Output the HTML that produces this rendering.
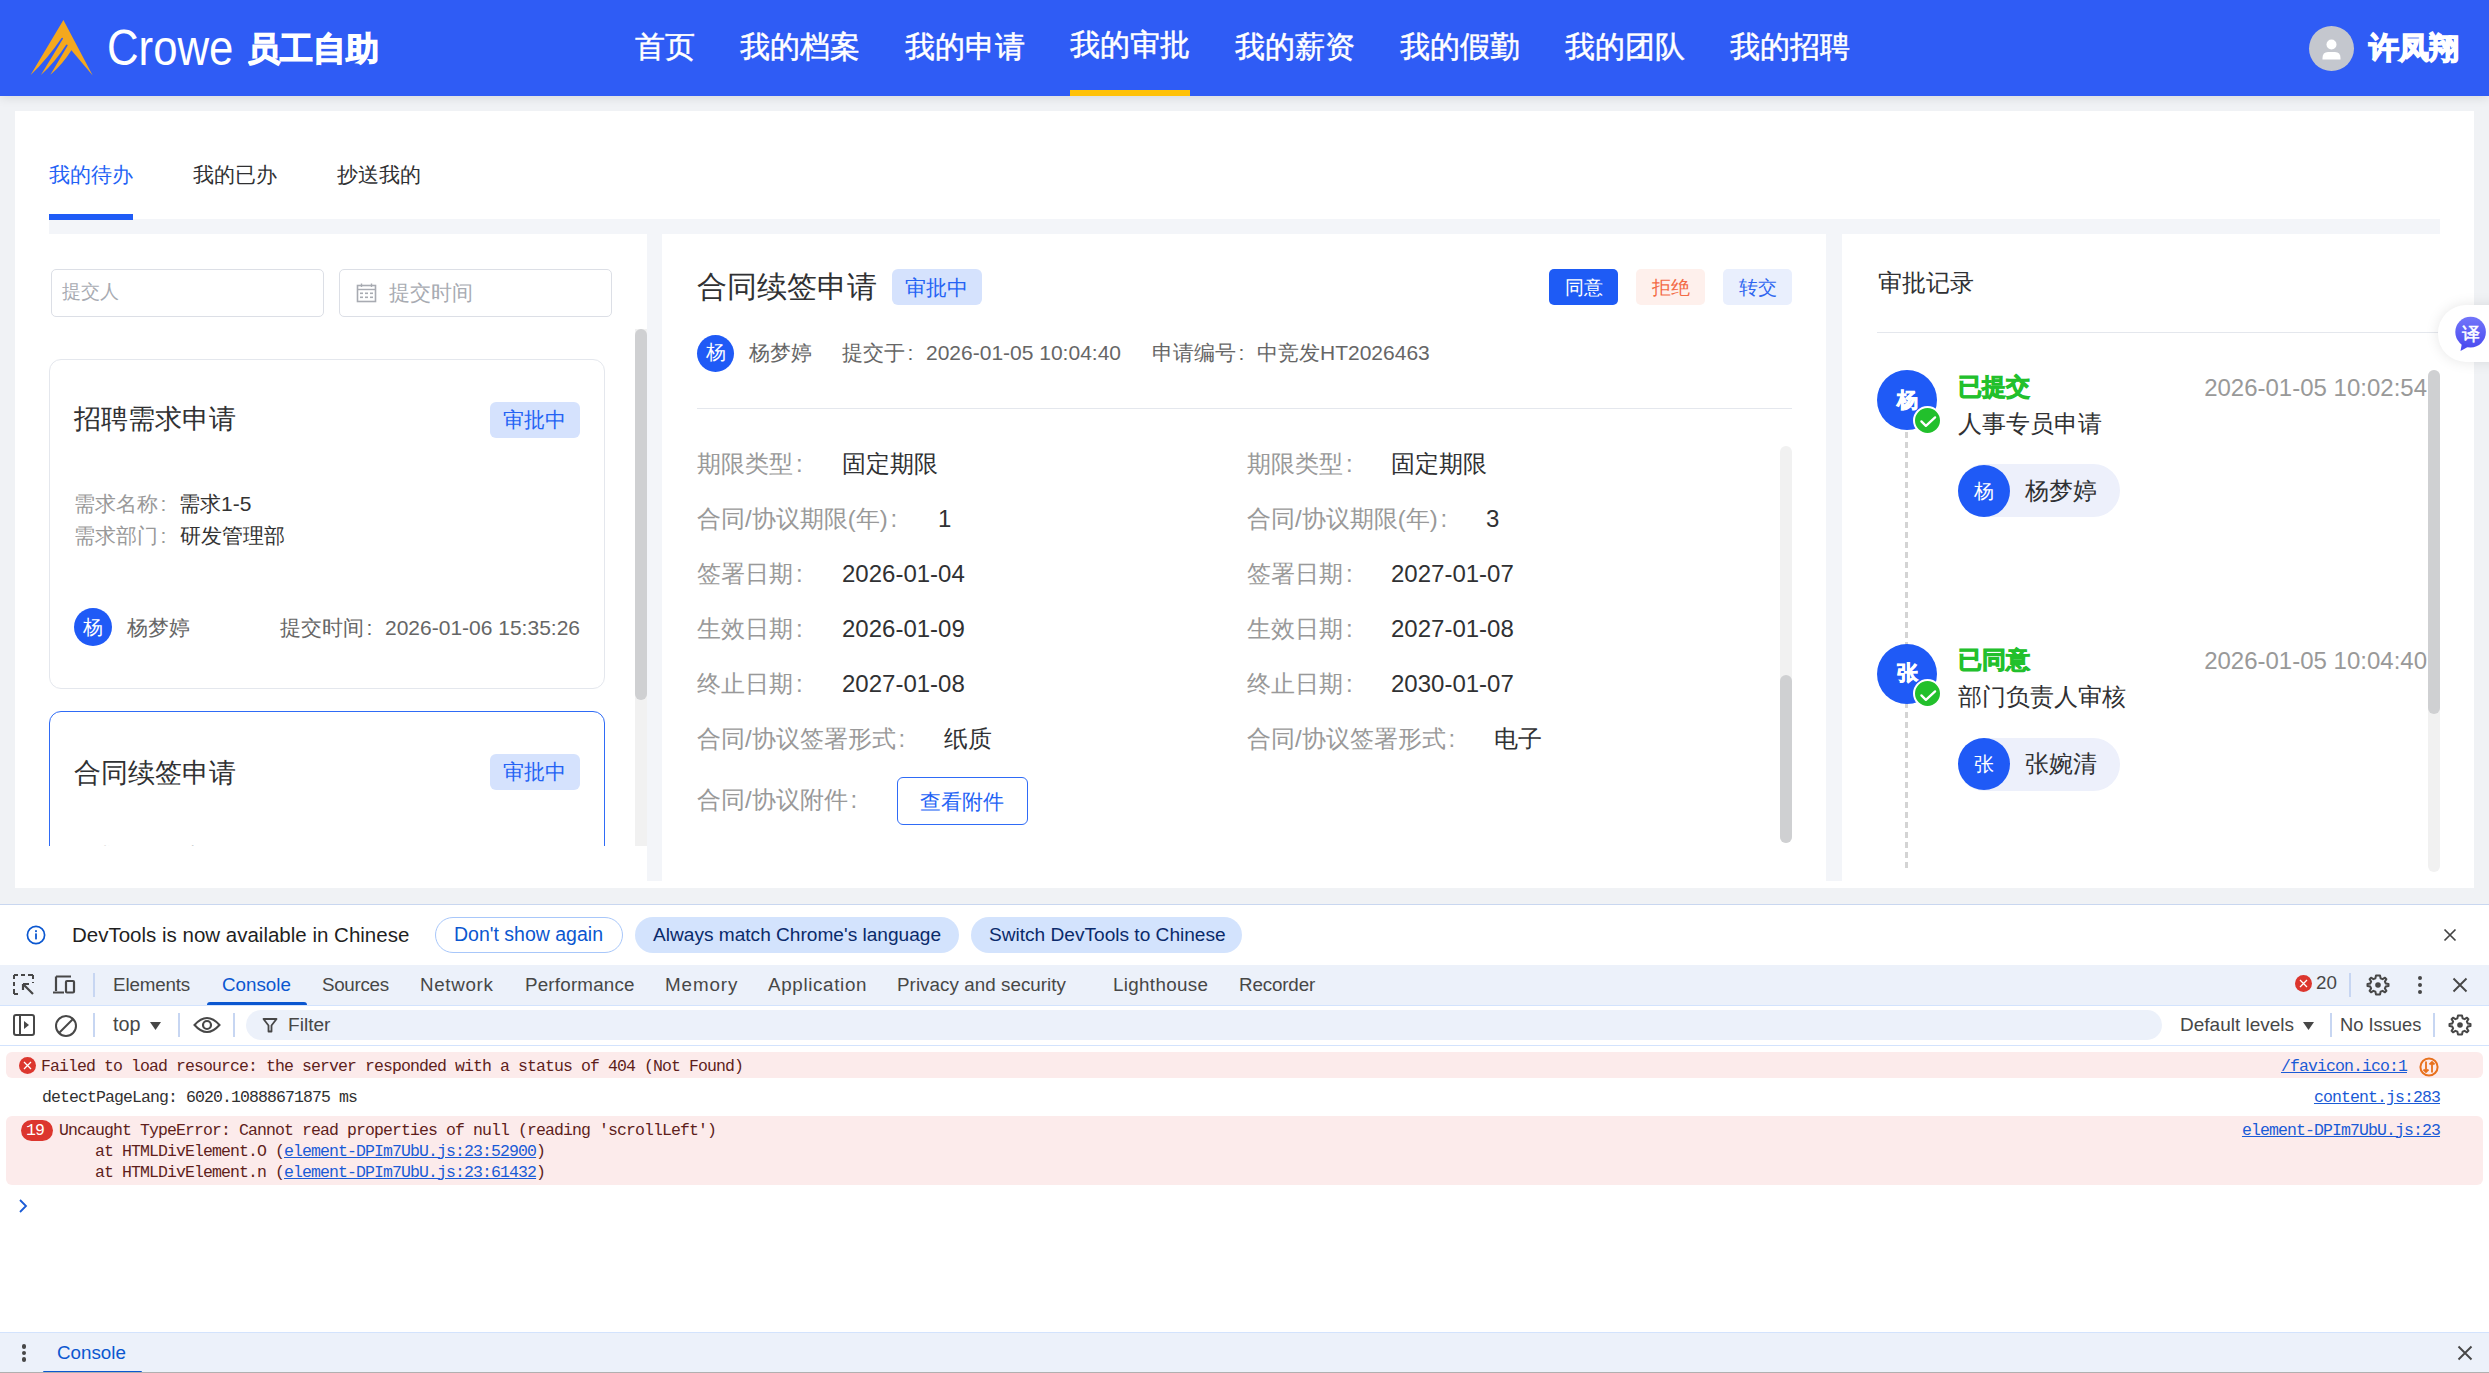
<!DOCTYPE html>
<html><head><meta charset="utf-8"><title>审批</title>
<style>
html,body{margin:0;padding:0;}
body{width:2489px;height:1373px;position:relative;overflow:hidden;background:#fff;font-family:"Liberation Sans",sans-serif;}
.t{position:absolute;white-space:nowrap;}
.a{position:absolute;}
.c{display:inline-block;width:1em;padding-left:0.12em;box-sizing:border-box;}
.b{-webkit-text-stroke:0.9px currentColor;}
.clip{position:absolute;left:0;top:0;width:2489px;height:1373px;}
</style></head><body>
<div class="a" style="left:0px;top:0px;width:2489px;height:904px;background:#F0F2F5;"></div>
<div class="a" style="left:0px;top:0px;width:2489px;height:96px;background:#2F5CF5;box-shadow:0 2px 10px rgba(0,0,0,0.10);"></div>
<svg class="a" style="left:25px;top:15px;" width="75" height="65" viewBox="0 0 75 65"><path d="M38.4 5 L67.7 60.4 L46.4 35.3 Q37.8 49.2 25.4 59.8 L42.7 30.6 Q42.1 28.9 41.0 30.0 Q30.4 46.7 15.9 60.1 L38.1 23.6 Q37.5 21.9 36.4 23.2 Q22.9 43.2 5.6 60.1 Z" fill="#F4A81E"/></svg>
<div class="t" style="left:106.5px;top:23.27px;font-size:50px;line-height:50px;color:#fff;transform:scaleX(0.875);transform-origin:0 0;">Crowe</div>
<div class="t" style="left:247px;top:31.57px;font-size:33px;line-height:33px;color:#fff;font-weight:700;-webkit-text-stroke:1.2px #fff;">员工自助</div>
<div class="t" style="left:635px;top:31.61px;font-size:30px;line-height:30px;color:#fff;-webkit-text-stroke:0.5px #fff;">首页</div>
<div class="t" style="left:740px;top:31.61px;font-size:30px;line-height:30px;color:#fff;-webkit-text-stroke:0.5px #fff;">我的档案</div>
<div class="t" style="left:905px;top:31.61px;font-size:30px;line-height:30px;color:#fff;-webkit-text-stroke:0.5px #fff;">我的申请</div>
<div class="t" style="left:1070px;top:29.61px;font-size:30px;line-height:30px;color:#fff;-webkit-text-stroke:0.5px #fff;">我的审批</div>
<div class="t" style="left:1235px;top:31.61px;font-size:30px;line-height:30px;color:#fff;-webkit-text-stroke:0.5px #fff;">我的薪资</div>
<div class="t" style="left:1400px;top:31.61px;font-size:30px;line-height:30px;color:#fff;-webkit-text-stroke:0.5px #fff;">我的假勤</div>
<div class="t" style="left:1565px;top:31.61px;font-size:30px;line-height:30px;color:#fff;-webkit-text-stroke:0.5px #fff;">我的团队</div>
<div class="t" style="left:1730px;top:31.61px;font-size:30px;line-height:30px;color:#fff;-webkit-text-stroke:0.5px #fff;">我的招聘</div>
<div class="a" style="left:1070px;top:90px;width:120px;height:6px;background:#FFC107;"></div>
<div class="a" style="left:2309.00px;top:26.00px;width:45px;height:45px;border-radius:50%;background:#C4C7CE;box-sizing:border-box;"></div>
<svg class="a" style="left:2309px;top:26px;" width="45" height="45" viewBox="0 0 45 45"><circle cx="22.5" cy="18.5" r="5" fill="#fff"/><path d="M13.5 32 Q13.5 26 19 26 L26 26 Q31.5 26 31.5 32 L31.5 33.5 L13.5 33.5 Z" fill="#fff"/></svg>
<div class="t" style="left:2369px;top:32.61px;font-size:30px;line-height:30px;color:#fff;font-weight:700;-webkit-text-stroke:1.4px #fff;">许凤翔</div>
<div class="a" style="left:15px;top:111px;width:2459px;height:777px;background:#fff;"></div>
<div class="t" style="left:49px;top:164.56px;font-size:20.6px;line-height:20.6px;color:#2463F5;">我的待办</div>
<div class="t" style="left:193px;top:164.56px;font-size:20.6px;line-height:20.6px;color:#303133;">我的已办</div>
<div class="t" style="left:337px;top:164.56px;font-size:20.6px;line-height:20.6px;color:#303133;">抄送我的</div>
<div class="a" style="left:49px;top:219px;width:2391px;height:15px;background:#F3F5F9;"></div>
<div class="a" style="left:49px;top:214px;width:84px;height:6px;background:#1F5CF6;"></div>
<div class="a" style="left:647px;top:234px;width:15px;height:647px;background:#F3F5F9;"></div>
<div class="a" style="left:1826px;top:234px;width:16px;height:647px;background:#F3F5F9;"></div>
<div class="a" style="left:51px;top:269px;width:273px;height:48px;box-sizing:border-box;border:1px solid #DCDFE6;border-radius:5px;"></div>
<div class="a" style="left:339px;top:269px;width:273px;height:48px;box-sizing:border-box;border:1px solid #DCDFE6;border-radius:5px;"></div>
<div class="t" style="left:62px;top:283.34px;font-size:18.5px;line-height:18.5px;color:#A8ABB2;">提交人</div>
<svg class="a" style="left:356px;top:283px;" width="21" height="20" viewBox="0 0 21 20"><rect x="1.5" y="2.5" width="18" height="16" fill="none" stroke="#A8ABB2" stroke-width="1.6"/><line x1="1.5" y1="6.5" x2="19.5" y2="6.5" stroke="#A8ABB2" stroke-width="1.4"/><line x1="5.5" y1="0.5" x2="5.5" y2="4" stroke="#A8ABB2" stroke-width="1.4"/><line x1="15.5" y1="0.5" x2="15.5" y2="4" stroke="#A8ABB2" stroke-width="1.4"/><g fill="#A8ABB2"><rect x="4" y="9.5" width="3" height="1.6"/><rect x="9" y="9.5" width="3" height="1.6"/><rect x="14" y="9.5" width="3" height="1.6"/><rect x="4" y="13.5" width="3" height="1.6"/><rect x="9" y="13.5" width="3" height="1.6"/><rect x="14" y="13.5" width="3" height="1.6"/></g></svg>
<div class="t" style="left:389px;top:282.22px;font-size:21px;line-height:21px;color:#A8ABB2;">提交时间</div>
<div class="clip" style="clip-path:inset(329px 1842px 527px 49px)">
<div class="a" style="left:49px;top:359px;width:556px;height:330px;box-sizing:border-box;border:1px solid #E4E7ED;border-radius:12px;"></div>
<div class="t" style="left:74px;top:406.14px;font-size:27px;line-height:27px;color:#303133;">招聘需求申请</div>
<div class="a" style="left:490px;top:402px;width:90px;height:36px;box-sizing:border-box;background:#D5E2FD;border-radius:6px;"></div>
<div class="t" style="left:503px;top:409.22px;font-size:21px;line-height:21px;color:#2462F4;">审批中</div>
<div class="t" style="left:74px;top:493.22px;font-size:21px;line-height:21px;color:#999;">需求名称<span class="c">:</span></div>
<div class="t" style="left:179px;top:493.22px;font-size:21px;line-height:21px;color:#333;">需求1-5</div>
<div class="t" style="left:74px;top:525.22px;font-size:21px;line-height:21px;color:#999;">需求部门<span class="c">:</span></div>
<div class="t" style="left:180px;top:525.22px;font-size:21px;line-height:21px;color:#333;">研发管理部</div>
<div class="a" style="left:74.00px;top:608.00px;width:38px;height:38px;border-radius:50%;background:#1F5AF6;box-sizing:border-box;"></div>
<div class="t" style="left:83px;top:617.07px;font-size:20px;line-height:20px;color:#fff;">杨</div>
<div class="t" style="left:127px;top:617.22px;font-size:21px;line-height:21px;color:#666;">杨梦婷</div>
<div class="t" style="right:1909px;top:616.52px;font-size:21px;line-height:21px;color:#666;">提交时间<span class="c">:</span>2026-01-06 15:35:26</div>
<div class="a" style="left:49px;top:711px;width:556px;height:330px;box-sizing:border-box;border:1px solid #2F6BF6;border-radius:12px;"></div>
<div class="t" style="left:74px;top:760.14px;font-size:27px;line-height:27px;color:#303133;">合同续签申请</div>
<div class="a" style="left:490px;top:754px;width:90px;height:36px;box-sizing:border-box;background:#D5E2FD;border-radius:6px;"></div>
<div class="t" style="left:503px;top:761.22px;font-size:21px;line-height:21px;color:#2462F4;">审批中</div>
<div class="t" style="left:74px;top:845.22px;font-size:21px;line-height:21px;color:#999;">需求名称<span class="c">:</span></div>
<div class="t" style="left:179px;top:845.22px;font-size:21px;line-height:21px;color:#333;">续签</div>
</div>
<div class="a" style="left:635px;top:329px;width:12px;height:517px;background:#F1F1F1;"></div>
<div class="a" style="left:635px;top:329px;width:12px;height:371px;background:#CFD0D2;border-radius:6px;"></div>
<div class="t" style="left:697px;top:271.61px;font-size:30px;line-height:30px;color:#303133;">合同续签申请</div>
<div class="a" style="left:892px;top:269px;width:90px;height:36px;box-sizing:border-box;background:#D5E2FD;border-radius:6px;"></div>
<div class="t" style="left:905px;top:277.22px;font-size:21px;line-height:21px;color:#2462F4;">审批中</div>
<div class="a" style="left:1549px;top:269px;width:69px;height:36px;box-sizing:border-box;background:#1E5BF5;border-radius:5px;"></div>
<div class="t" style="left:1565px;top:278.84px;font-size:18.5px;line-height:18.5px;color:#fff;">同意</div>
<div class="a" style="left:1636px;top:269px;width:69px;height:36px;box-sizing:border-box;background:#FEF0EC;border-radius:5px;"></div>
<div class="t" style="left:1652px;top:278.84px;font-size:18.5px;line-height:18.5px;color:#F36B47;">拒绝</div>
<div class="a" style="left:1723px;top:269px;width:69px;height:36px;box-sizing:border-box;background:#E9EFFD;border-radius:5px;"></div>
<div class="t" style="left:1739px;top:278.84px;font-size:18.5px;line-height:18.5px;color:#2F66F0;">转交</div>
<div class="a" style="left:697.10px;top:334.90px;width:37px;height:37px;border-radius:50%;background:#1F5AF6;box-sizing:border-box;"></div>
<div class="t" style="left:706px;top:343.49px;font-size:19.5px;line-height:19.5px;color:#fff;">杨</div>
<div class="t" style="left:749px;top:342.22px;font-size:21px;line-height:21px;color:#666;">杨梦婷</div>
<div class="t" style="left:842px;top:342.22px;font-size:21px;line-height:21px;color:#666;">提交于<span class="c">:</span>2026-01-05 10:04:40</div>
<div class="t" style="left:1152px;top:342.22px;font-size:21px;line-height:21px;color:#666;">申请编号<span class="c">:</span>中竞发HT2026463</div>
<div class="a" style="left:697px;top:408px;width:1095px;height:1px;background:#E4E7ED;"></div>
<div class="t" style="left:697px;top:452.08px;font-size:24px;line-height:24px;color:#999;">期限类型<span class="c">:</span></div>
<div class="t" style="left:842px;top:452.08px;font-size:24px;line-height:24px;color:#303133;">固定期限</div>
<div class="t" style="left:1247px;top:452.08px;font-size:24px;line-height:24px;color:#999;">期限类型<span class="c">:</span></div>
<div class="t" style="left:1391px;top:452.08px;font-size:24px;line-height:24px;color:#303133;">固定期限</div>
<div class="t" style="left:697px;top:507.08px;font-size:24px;line-height:24px;color:#999;">合同/协议期限(年)<span class="c">:</span></div>
<div class="t" style="left:938px;top:507.08px;font-size:24px;line-height:24px;color:#303133;">1</div>
<div class="t" style="left:1247px;top:507.08px;font-size:24px;line-height:24px;color:#999;">合同/协议期限(年)<span class="c">:</span></div>
<div class="t" style="left:1486px;top:507.08px;font-size:24px;line-height:24px;color:#303133;">3</div>
<div class="t" style="left:697px;top:562.08px;font-size:24px;line-height:24px;color:#999;">签署日期<span class="c">:</span></div>
<div class="t" style="left:842px;top:562.08px;font-size:24px;line-height:24px;color:#303133;">2026-01-04</div>
<div class="t" style="left:1247px;top:562.08px;font-size:24px;line-height:24px;color:#999;">签署日期<span class="c">:</span></div>
<div class="t" style="left:1391px;top:562.08px;font-size:24px;line-height:24px;color:#303133;">2027-01-07</div>
<div class="t" style="left:697px;top:617.08px;font-size:24px;line-height:24px;color:#999;">生效日期<span class="c">:</span></div>
<div class="t" style="left:842px;top:617.08px;font-size:24px;line-height:24px;color:#303133;">2026-01-09</div>
<div class="t" style="left:1247px;top:617.08px;font-size:24px;line-height:24px;color:#999;">生效日期<span class="c">:</span></div>
<div class="t" style="left:1391px;top:617.08px;font-size:24px;line-height:24px;color:#303133;">2027-01-08</div>
<div class="t" style="left:697px;top:672.08px;font-size:24px;line-height:24px;color:#999;">终止日期<span class="c">:</span></div>
<div class="t" style="left:842px;top:672.08px;font-size:24px;line-height:24px;color:#303133;">2027-01-08</div>
<div class="t" style="left:1247px;top:672.08px;font-size:24px;line-height:24px;color:#999;">终止日期<span class="c">:</span></div>
<div class="t" style="left:1391px;top:672.08px;font-size:24px;line-height:24px;color:#303133;">2030-01-07</div>
<div class="t" style="left:697px;top:727.08px;font-size:24px;line-height:24px;color:#999;">合同/协议签署形式<span class="c">:</span></div>
<div class="t" style="left:944px;top:727.08px;font-size:24px;line-height:24px;color:#303133;">纸质</div>
<div class="t" style="left:1247px;top:727.08px;font-size:24px;line-height:24px;color:#999;">合同/协议签署形式<span class="c">:</span></div>
<div class="t" style="left:1494px;top:727.08px;font-size:24px;line-height:24px;color:#303133;">电子</div>
<div class="t" style="left:697px;top:788.18px;font-size:24px;line-height:24px;color:#999;">合同/协议附件<span class="c">:</span></div>
<div class="a" style="left:897px;top:777px;width:131px;height:48px;box-sizing:border-box;border:1px solid #2F6BF6;border-radius:6px;"></div>
<div class="t" style="left:920px;top:791.22px;font-size:21px;line-height:21px;color:#2463F5;">查看附件</div>
<div class="a" style="left:1780px;top:446px;width:12px;height:397px;background:#F1F1F1;border-radius:6px;"></div>
<div class="a" style="left:1780px;top:675px;width:12px;height:168px;background:#CFD0D2;border-radius:6px;"></div>
<div class="t" style="left:1878px;top:271.61px;font-size:23.5px;line-height:23.5px;color:#303133;">审批记录</div>
<div class="a" style="left:1877px;top:332px;width:563px;height:1px;background:#E4E7ED;"></div>
<svg class="a" style="left:1904px;top:432px;" width="5" height="440" viewBox="0 0 5 440"><line x1="2.5" y1="0" x2="2.5" y2="440" stroke="#D4D4D4" stroke-width="3" stroke-dasharray="6 4"/></svg>
<div class="a" style="left:1877.00px;top:370.00px;width:60px;height:60px;border-radius:50%;background:#1F5AF6;box-sizing:border-box;"></div>
<div class="t" style="left:1896.5px;top:388.92px;font-size:21px;line-height:21px;color:#fff;font-weight:700;-webkit-text-stroke:0.7px #fff;">杨</div>
<div class="a" style="left:1912.50px;top:405.50px;width:29px;height:29px;border-radius:50%;background:#22C02C;box-sizing:border-box;border:2px solid #fff;"></div>
<svg class="a" style="left:1912px;top:405px;" width="30" height="30" viewBox="0 0 30 30"><path d="M9.4 16.4 L13.9 20.9 L23.1 12.4" fill="none" stroke="#fff" stroke-width="2.3" stroke-linecap="round" stroke-linejoin="round"/></svg>
<div class="t" style="left:1958px;top:375.61px;font-size:23.5px;line-height:23.5px;color:#22C02C;font-weight:700;-webkit-text-stroke:0.9px #22C02C;">已提交</div>
<div class="t" style="right:62px;top:375.98px;font-size:24px;line-height:24px;color:#999;">2026-01-05 10:02:54</div>
<div class="t" style="left:1958px;top:411.68px;font-size:24px;line-height:24px;color:#303133;">人事专员申请</div>
<div class="a" style="left:1958px;top:464px;width:162px;height:53px;box-sizing:border-box;background:#EDF0FB;border-radius:27px;"></div>
<div class="a" style="left:1958.00px;top:464.50px;width:52px;height:52px;border-radius:50%;background:#1F5AF6;box-sizing:border-box;"></div>
<div class="t" style="left:1974px;top:480.57px;font-size:20px;line-height:20px;color:#fff;">杨</div>
<div class="t" style="left:2025px;top:478.68px;font-size:24px;line-height:24px;color:#303133;">杨梦婷</div>
<div class="a" style="left:1877.00px;top:643.50px;width:60px;height:60px;border-radius:50%;background:#1F5AF6;box-sizing:border-box;"></div>
<div class="t" style="left:1896.5px;top:662.42px;font-size:21px;line-height:21px;color:#fff;font-weight:700;-webkit-text-stroke:0.7px #fff;">张</div>
<div class="a" style="left:1912.50px;top:679.00px;width:29px;height:29px;border-radius:50%;background:#22C02C;box-sizing:border-box;border:2px solid #fff;"></div>
<svg class="a" style="left:1912px;top:678.5px;" width="30" height="30" viewBox="0 0 30 30"><path d="M9.4 16.4 L13.9 20.9 L23.1 12.4" fill="none" stroke="#fff" stroke-width="2.3" stroke-linecap="round" stroke-linejoin="round"/></svg>
<div class="t" style="left:1958px;top:649.11px;font-size:23.5px;line-height:23.5px;color:#22C02C;font-weight:700;-webkit-text-stroke:0.9px #22C02C;">已同意</div>
<div class="t" style="right:62px;top:649.48px;font-size:24px;line-height:24px;color:#999;">2026-01-05 10:04:40</div>
<div class="t" style="left:1958px;top:685.18px;font-size:24px;line-height:24px;color:#303133;">部门负责人审核</div>
<div class="a" style="left:1958px;top:737.5px;width:162px;height:53.0px;box-sizing:border-box;background:#EDF0FB;border-radius:27px;"></div>
<div class="a" style="left:1958.00px;top:738.00px;width:52px;height:52px;border-radius:50%;background:#1F5AF6;box-sizing:border-box;"></div>
<div class="t" style="left:1974px;top:754.07px;font-size:20px;line-height:20px;color:#fff;">张</div>
<div class="t" style="left:2025px;top:752.18px;font-size:24px;line-height:24px;color:#303133;">张婉清</div>
<div class="a" style="left:2428px;top:370px;width:12px;height:502px;background:#F1F1F1;border-radius:6px;"></div>
<div class="a" style="left:2428px;top:370px;width:12px;height:344px;background:#CFD0D2;border-radius:6px;"></div>
<div class="a" style="left:2438px;top:305px;width:82px;height:57px;box-sizing:border-box;background:#fff;border-radius:28px;box-shadow:0 0 14px rgba(0,0,0,0.10);"></div>
<svg class="a" style="left:2455px;top:316px;" width="32" height="36" viewBox="0 0 32 36"><defs><linearGradient id="tg" x1="0" y1="0" x2="0" y2="1"><stop offset="0" stop-color="#7275FA"/><stop offset="1" stop-color="#4C4DF0"/></linearGradient></defs><circle cx="15.6" cy="16.1" r="15.3" fill="url(#tg)"/><path d="M7 27 L14.5 30 L5.5 35 Z" fill="#4C4DF0"/></svg>
<div class="t" style="left:2461.5px;top:324.76px;font-size:18px;line-height:18px;color:#fff;-webkit-text-stroke:0.5px #fff;">译</div>
<div class="a" style="left:0px;top:904px;width:2489px;height:1px;background:#C9D7F0;"></div>
<div class="a" style="left:0px;top:905px;width:2489px;height:60px;background:#FFFFFF;"></div>
<svg class="a" style="left:26px;top:925px;" width="20" height="20" viewBox="0 0 20 20"><circle cx="10" cy="10" r="8.6" fill="none" stroke="#0B57D0" stroke-width="1.7"/><rect x="9.1" y="8.4" width="1.8" height="6" fill="#0B57D0"/><rect x="9.1" y="5.2" width="1.8" height="1.9" fill="#0B57D0"/></svg>
<div class="t" style="left:72px;top:924.95px;font-size:20.5px;line-height:20.5px;color:#1F1F1F;">DevTools is now available in Chinese</div>
<div class="a" style="left:435px;top:917px;width:188px;height:36px;box-sizing:border-box;border:1px solid #A8C7FA;border-radius:18px;"></div>
<div class="t" style="left:454px;top:924.99px;font-size:19.5px;line-height:19.5px;color:#0B57D0;">Don't show again</div>
<div class="a" style="left:635px;top:917px;width:324px;height:36px;box-sizing:border-box;background:#D3E3FD;border-radius:18px;"></div>
<div class="t" style="left:653px;top:925.33px;font-size:19.1px;line-height:19.1px;color:#0A2A6B;">Always match Chrome's language</div>
<div class="a" style="left:971px;top:917px;width:271px;height:36px;box-sizing:border-box;background:#D3E3FD;border-radius:18px;"></div>
<div class="t" style="left:989px;top:925.33px;font-size:19.1px;line-height:19.1px;color:#0A2A6B;">Switch DevTools to Chinese</div>
<svg class="a" style="left:2443px;top:928px;" width="14" height="14" viewBox="0 0 14 14"><path d="M1.5 1.5 L12.5 12.5 M12.5 1.5 L1.5 12.5" stroke="#444" stroke-width="1.7"/></svg>
<div class="a" style="left:0px;top:965px;width:2489px;height:40px;background:#ECF1FA;"></div>
<div class="a" style="left:0px;top:1005px;width:2489px;height:1px;background:#D3E3FD;"></div>
<svg class="a" style="left:13px;top:974px;" width="22" height="22" viewBox="0 0 22 22"><path d="M1 1 H5 M8 1 H12 M15 1 H20 M1 1 V5 M1 8 V12 M1 15 V20 M1 20 H5 M20 1 V5 M20 8 V9" stroke="#474747" stroke-width="2" fill="none" stroke-dasharray="0"/><path d="M10 10 L20 20 M10 10 H16 M10 10 V16" stroke="#474747" stroke-width="2.2" fill="none"/></svg>
<svg class="a" style="left:53px;top:975px;" width="26" height="20" viewBox="0 0 26 20"><path d="M3 1.5 H18 M3 1.5 V16 M0 17.5 H11" stroke="#474747" stroke-width="2.2" fill="none"/><rect x="13" y="6" width="8" height="11.5" rx="1" fill="none" stroke="#474747" stroke-width="2.2"/></svg>
<div class="a" style="left:93px;top:973px;width:2px;height:24px;background:#C7D6F2;"></div>
<div class="t" style="left:113px;top:976.49px;font-size:18.8px;line-height:18.8px;color:#474747;letter-spacing:-0.15px;">Elements</div>
<div class="t" style="left:222px;top:976.49px;font-size:18.8px;line-height:18.8px;color:#0B57D0;letter-spacing:0px;">Console</div>
<div class="t" style="left:322px;top:976.49px;font-size:18.8px;line-height:18.8px;color:#474747;letter-spacing:-0.3px;">Sources</div>
<div class="t" style="left:420px;top:976.49px;font-size:18.8px;line-height:18.8px;color:#474747;letter-spacing:0.65px;">Network</div>
<div class="t" style="left:525px;top:976.49px;font-size:18.8px;line-height:18.8px;color:#474747;letter-spacing:0.2px;">Performance</div>
<div class="t" style="left:665px;top:976.49px;font-size:18.8px;line-height:18.8px;color:#474747;letter-spacing:0.9px;">Memory</div>
<div class="t" style="left:768px;top:976.49px;font-size:18.8px;line-height:18.8px;color:#474747;letter-spacing:0.66px;">Application</div>
<div class="t" style="left:897px;top:976.49px;font-size:18.8px;line-height:18.8px;color:#474747;letter-spacing:0.05px;">Privacy and security</div>
<div class="t" style="left:1113px;top:976.49px;font-size:18.8px;line-height:18.8px;color:#474747;letter-spacing:0.33px;">Lighthouse</div>
<div class="t" style="left:1239px;top:976.49px;font-size:18.8px;line-height:18.8px;color:#474747;letter-spacing:-0.15px;">Recorder</div>
<div class="a" style="left:207px;top:1002px;width:100px;height:3px;background:#0B57D0;border-radius:3px 3px 0 0;"></div>
<div class="a" style="left:2295.00px;top:975.00px;width:17px;height:17px;border-radius:50%;background:#DC362E;box-sizing:border-box;"></div>
<svg class="a" style="left:2295px;top:975px;" width="17" height="17" viewBox="0 0 17 17"><path d="M5 5 L12 12 M12 5 L5 12" stroke="#fff" stroke-width="1.3"/></svg>
<div class="t" style="left:2316px;top:973.79px;font-size:18.8px;line-height:18.8px;color:#474747;">20</div>
<div class="a" style="left:2349px;top:973px;width:2px;height:24px;background:#C7D6F2;"></div>
<svg class="a" style="left:2366px;top:973px;" width="24" height="24" viewBox="0 0 24 24"><path d="M12 2.5 L14 2.5 L14.6 5.3 L16.6 6.2 L19 4.7 L20.4 6.1 L18.9 8.5 L19.7 10.4 L22.5 11 L22.5 13 L19.7 13.6 L18.9 15.5 L20.4 17.9 L19 19.3 L16.6 17.8 L14.6 18.7 L14 21.5 L10 21.5 L9.4 18.7 L7.4 17.8 L5 19.3 L3.6 17.9 L5.1 15.5 L4.3 13.6 L1.5 13 L1.5 11 L4.3 10.4 L5.1 8.5 L3.6 6.1 L5 4.7 L7.4 6.2 L9.4 5.3 L10 2.5 Z" fill="none" stroke="#474747" stroke-width="2" stroke-linejoin="round"/><circle cx="12" cy="12" r="2.8" fill="#474747"/></svg>
<div class="a" style="left:2417.70px;top:975.50px;width:4px;height:4px;border-radius:50%;background:#474747;box-sizing:border-box;"></div>
<div class="a" style="left:2417.70px;top:982.50px;width:4px;height:4px;border-radius:50%;background:#474747;box-sizing:border-box;"></div>
<div class="a" style="left:2417.70px;top:989.50px;width:4px;height:4px;border-radius:50%;background:#474747;box-sizing:border-box;"></div>
<svg class="a" style="left:2452px;top:977px;" width="16" height="16" viewBox="0 0 16 16"><path d="M1.5 1.5 L14.5 14.5 M14.5 1.5 L1.5 14.5" stroke="#474747" stroke-width="1.9"/></svg>
<div class="a" style="left:0px;top:1045px;width:2489px;height:1px;background:#D3E3FD;"></div>
<svg class="a" style="left:13px;top:1014px;" width="22" height="22" viewBox="0 0 22 22"><rect x="1" y="1" width="20" height="20" rx="2" fill="none" stroke="#474747" stroke-width="2"/><line x1="7" y1="1" x2="7" y2="21" stroke="#474747" stroke-width="2"/><path d="M11 7 L16 11 L11 15 Z" fill="#474747"/></svg>
<svg class="a" style="left:54px;top:1014px;" width="24" height="24" viewBox="0 0 24 24"><circle cx="12" cy="12" r="10" fill="none" stroke="#474747" stroke-width="2"/><line x1="5" y1="19" x2="19" y2="5" stroke="#474747" stroke-width="2"/></svg>
<div class="a" style="left:93px;top:1013px;width:2px;height:24px;background:#C7D6F2;"></div>
<div class="t" style="left:113px;top:1015.24px;font-size:19.8px;line-height:19.8px;color:#474747;">top</div>
<svg class="a" style="left:149px;top:1021px;" width="13" height="10" viewBox="0 0 13 10"><path d="M1 1 H12 L6.5 9 Z" fill="#474747"/></svg>
<div class="a" style="left:178px;top:1013px;width:2px;height:24px;background:#C7D6F2;"></div>
<svg class="a" style="left:193px;top:1015px;" width="28" height="20" viewBox="0 0 28 20"><path d="M1.5 10 Q14 -4 26.5 10 Q14 24 1.5 10 Z" fill="none" stroke="#474747" stroke-width="2"/><circle cx="14" cy="10" r="4" fill="none" stroke="#474747" stroke-width="2.2"/></svg>
<div class="a" style="left:233px;top:1013px;width:2px;height:24px;background:#C7D6F2;"></div>
<div class="a" style="left:246px;top:1010px;width:1916px;height:30px;box-sizing:border-box;background:#ECF1FA;border-radius:15px;"></div>
<svg class="a" style="left:262px;top:1017px;" width="16" height="16" viewBox="0 0 16 16"><path d="M1.5 2 H14.5 L9.5 8.5 V14.5 L6.5 14.5 V8.5 Z" fill="none" stroke="#474747" stroke-width="1.8" stroke-linejoin="round"/></svg>
<div class="t" style="left:288px;top:1014.83px;font-size:19.1px;line-height:19.1px;color:#474747;">Filter</div>
<div class="t" style="left:2180px;top:1014.92px;font-size:19px;line-height:19px;color:#474747;">Default levels</div>
<svg class="a" style="left:2302px;top:1021px;" width="13" height="10" viewBox="0 0 13 10"><path d="M1 1 H12 L6.5 9 Z" fill="#474747"/></svg>
<div class="a" style="left:2330px;top:1013px;width:2px;height:24px;background:#C7D6F2;"></div>
<div class="t" style="left:2340px;top:1015.51px;font-size:18.3px;line-height:18.3px;color:#474747;">No Issues</div>
<div class="a" style="left:2433px;top:1013px;width:2px;height:24px;background:#C7D6F2;"></div>
<svg class="a" style="left:2448px;top:1013px;" width="24" height="24" viewBox="0 0 24 24"><path d="M12 2.5 L14 2.5 L14.6 5.3 L16.6 6.2 L19 4.7 L20.4 6.1 L18.9 8.5 L19.7 10.4 L22.5 11 L22.5 13 L19.7 13.6 L18.9 15.5 L20.4 17.9 L19 19.3 L16.6 17.8 L14.6 18.7 L14 21.5 L10 21.5 L9.4 18.7 L7.4 17.8 L5 19.3 L3.6 17.9 L5.1 15.5 L4.3 13.6 L1.5 13 L1.5 11 L4.3 10.4 L5.1 8.5 L3.6 6.1 L5 4.7 L7.4 6.2 L9.4 5.3 L10 2.5 Z" fill="none" stroke="#474747" stroke-width="2" stroke-linejoin="round"/><circle cx="12" cy="12" r="2.8" fill="#474747"/></svg>
<div class="a" style="left:6px;top:1052px;width:2477px;height:26px;box-sizing:border-box;background:#FCEBEB;border-radius:6px;"></div>
<div class="a" style="left:18.90px;top:1056.80px;width:17px;height:17px;border-radius:50%;background:#DC362E;box-sizing:border-box;"></div>
<svg class="a" style="left:19px;top:1057px;" width="17" height="17" viewBox="0 0 17 17"><path d="M5 5 L12 12 M12 5 L5 12" stroke="#fff" stroke-width="1.3"/></svg>
<div class="t" style="left:41px;top:1058.53px;font-size:16.5px;line-height:16.5px;color:#5E1E1B;font-family:'Liberation Mono',monospace;letter-spacing:-0.9px;">Failed to load resource: the server responded with a status of 404 (Not Found)</div>
<div class="t" style="right:82px;top:1058.53px;font-size:16.5px;line-height:16.5px;color:#1A5BD6;font-family:'Liberation Mono',monospace;letter-spacing:-0.9px;"><u>/favicon.ico:1</u></div>
<svg class="a" style="left:2419px;top:1057px;" width="20" height="20" viewBox="0 0 20 20"><circle cx="10" cy="10" r="8.6" fill="none" stroke="#E8711C" stroke-width="2"/><path d="M7 4.5 V15 M4.5 12.5 L7 15 L9.5 12.5 M13 15.5 V5 M10.5 7.5 L13 5 L15.5 7.5" fill="none" stroke="#E8711C" stroke-width="1.8"/></svg>
<div class="t" style="left:42px;top:1090.03px;font-size:16.5px;line-height:16.5px;color:#303030;font-family:'Liberation Mono',monospace;letter-spacing:-0.9px;">detectPageLang: 6020.10888671875 ms</div>
<div class="t" style="right:49px;top:1090.03px;font-size:16.5px;line-height:16.5px;color:#1A5BD6;font-family:'Liberation Mono',monospace;letter-spacing:-0.9px;"><u>content.js:283</u></div>
<div class="a" style="left:6px;top:1116px;width:2477px;height:69px;box-sizing:border-box;background:#FCEBEB;border-radius:6px;"></div>
<div class="a" style="left:21px;top:1120px;width:32px;height:21px;box-sizing:border-box;background:#DC362E;border-radius:11px;"></div>
<div class="t" style="left:26px;top:1123.03px;font-size:16.5px;line-height:16.5px;color:#fff;font-family:'Liberation Mono',monospace;letter-spacing:-0.9px;">19</div>
<div class="t" style="left:59px;top:1122.53px;font-size:16.5px;line-height:16.5px;color:#5E1E1B;font-family:'Liberation Mono',monospace;letter-spacing:-0.9px;">Uncaught TypeError: Cannot read properties of null (reading 'scrollLeft')</div>
<div class="t" style="right:49px;top:1122.53px;font-size:16.5px;line-height:16.5px;color:#1A5BD6;font-family:'Liberation Mono',monospace;letter-spacing:-0.9px;"><u>element-DPIm7UbU.js:23</u></div>
<div class="t" style="left:95px;top:1143.53px;font-size:16.5px;line-height:16.5px;color:#5E1E1B;font-family:'Liberation Mono',monospace;letter-spacing:-0.9px;">at HTMLDivElement.O (<u style="color:#1A5BD6">element-DPIm7UbU.js:23:52900</u>)</div>
<div class="t" style="left:95px;top:1164.53px;font-size:16.5px;line-height:16.5px;color:#5E1E1B;font-family:'Liberation Mono',monospace;letter-spacing:-0.9px;">at HTMLDivElement.n (<u style="color:#1A5BD6">element-DPIm7UbU.js:23:61432</u>)</div>
<svg class="a" style="left:17px;top:1198px;" width="12" height="16" viewBox="0 0 12 16"><path d="M3 2 L9 8 L3 14" fill="none" stroke="#1A5BD6" stroke-width="1.8"/></svg>
<div class="a" style="left:0px;top:1332px;width:2489px;height:1px;background:#D3E3FD;"></div>
<div class="a" style="left:0px;top:1333px;width:2489px;height:39px;background:#ECF1FA;"></div>
<div class="a" style="left:0px;top:1372px;width:2489px;height:1px;background:#B0B0B0;"></div>
<div class="a" style="left:21.90px;top:1344.40px;width:4.2px;height:4.2px;border-radius:50%;background:#474747;box-sizing:border-box;"></div>
<div class="a" style="left:21.90px;top:1350.90px;width:4.2px;height:4.2px;border-radius:50%;background:#474747;box-sizing:border-box;"></div>
<div class="a" style="left:21.90px;top:1357.40px;width:4.2px;height:4.2px;border-radius:50%;background:#474747;box-sizing:border-box;"></div>
<div class="t" style="left:57px;top:1343.79px;font-size:18.8px;line-height:18.8px;color:#0B57D0;">Console</div>
<div class="a" style="left:43px;top:1370.5px;width:99px;height:1.5px;background:#0B57D0;border-radius:2px 2px 0 0;"></div>
<svg class="a" style="left:2457px;top:1345px;" width="16" height="16" viewBox="0 0 16 16"><path d="M1.5 1.5 L14.5 14.5 M14.5 1.5 L1.5 14.5" stroke="#474747" stroke-width="1.9"/></svg>
</body></html>
